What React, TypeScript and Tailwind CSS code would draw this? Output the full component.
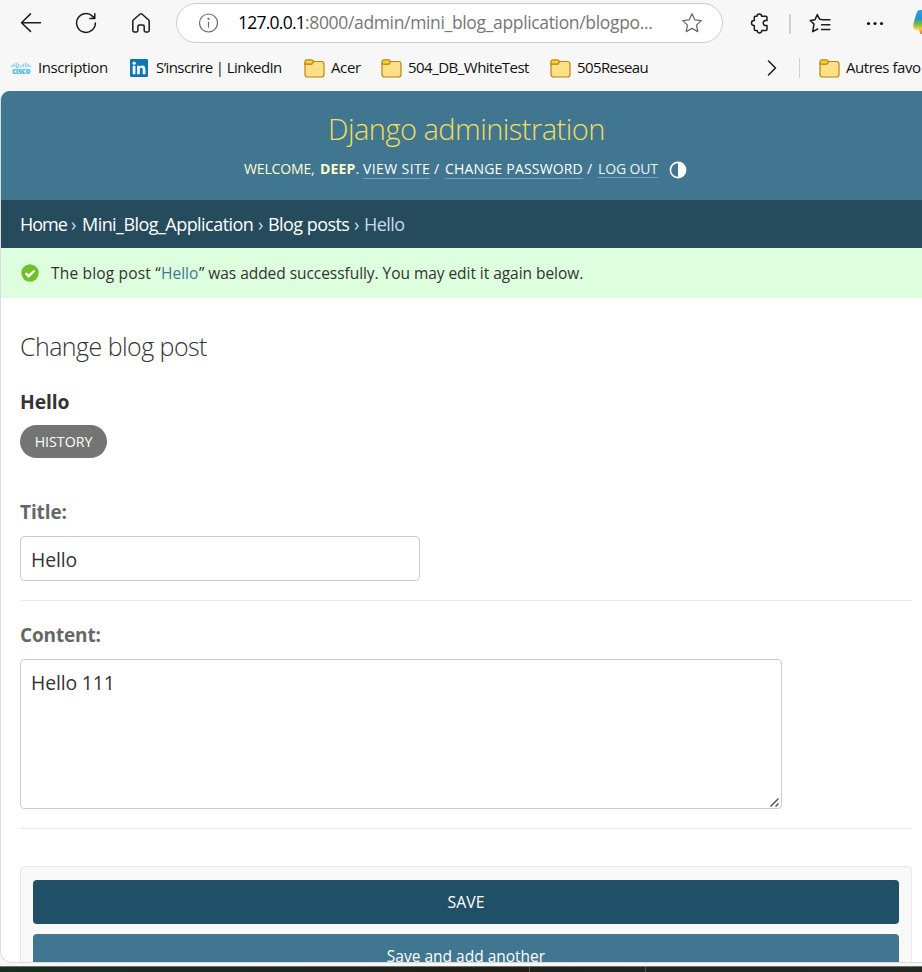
import React from "react";

function FolderIcon() {
  return (
    <svg width="21" height="19" viewBox="0 0 21 19" className="shrink-0">
      <path d="M1 4v11.500A2.500 2.500 0 0 0 3.500 18h14a2.500 2.500 0 0 0 2.500-2.500V5A2.500 2.500 0 0 0 17.500 2.500H9.500L8 5H1Z" fill="#ffdf87" stroke="#b8860b" strokeWidth="1.200" />
      <path d="M1 5V2.700A1.900 1.900 0 0 1 2.900.8h4.300c1 0 1.700.5 2.300 1.500L8.400 4.300c-.4.600-.8.800-1.500.8Z" fill="#fbcf3b" stroke="#b8860b" strokeWidth="1.200" />
    </svg>
  );
}

function CiscoIcon() {
  return (
    <svg width="20" height="14" viewBox="0 0 20 14" className="shrink-0">
      <g stroke="#8fd3ee" strokeWidth="1.500" strokeLinecap="round">
        <path d="M.8 4.500v1M3 3.200v2.300M5.300 2.200v3.500M7.600 3.200v2.300M10 4.500v1M12.300 3.200v2.300M14.700 2.200v3.500M17 3.200v2.300M19.200 4.500v1" />
      </g>
      <text x="10" y="12.500" textAnchor="middle" fontSize="8" fontWeight="800" fill="#4dbde6" textLength="18" lengthAdjust="spacingAndGlyphs">cisco</text>
    </svg>
  );
}

function LinkedInIcon() {
  return (
    <svg width="18" height="18" viewBox="0 0 18 18" className="shrink-0">
      <rect width="18" height="18" rx="1.300" fill="#0a76b7" />
      <circle cx="4.100" cy="4.200" r="1.600" fill="#fff" />
      <path d="M2.700 6.800h2.700v8.400H2.700zM7.100 6.800h2.600v1.200c.5-.8 1.400-1.400 2.600-1.400 2.300 0 3.100 1.500 3.100 3.800v4.800h-2.700v-4.300c0-1.200-.2-2.100-1.300-2.100-1.200 0-1.600.9-1.600 2.100v4.300H7.100z" fill="#fff" />
    </svg>
  );
}

function Bookmark({ icon, label, className }: { icon: React.ReactNode; label: string; className: string }) {
  return (
    <div className={"flex shrink-0 items-center whitespace-nowrap text-[15px] text-[#111] " + className}>
      {icon}
      <span className="pb-0.5">{label}</span>
    </div>
  );
}

function Toolbar() {
  return (
    <div className="flex h-[46px] shrink-0 items-center">
      <svg width="22" height="22" viewBox="0 0 22 22" className="ml-5 shrink-0" fill="none" stroke="#1b1b1b" strokeWidth="1.500" strokeLinecap="round" strokeLinejoin="round">
        <path d="M20.500 10.700H1.500M10.500 1.900 1.500 10.700l9 8.700" />
      </svg>
      <svg width="22" height="22" viewBox="0 0 22 22" className="ml-[33px] shrink-0" fill="none" stroke="#1b1b1b" strokeWidth="1.500" strokeLinecap="round" strokeLinejoin="round">
        <path d="M20.400 11a9.400 9.400 0 1 1-3-6.900L19.700 6.400M19.800 1.700v4.800h-4.900" />
      </svg>
      <svg width="20" height="22" viewBox="0 0 20 22" className="ml-[34px] shrink-0" fill="none" stroke="#1b1b1b" strokeWidth="1.500" strokeLinejoin="round">
        <path d="M1.800 9.300c0-.6.300-1.100.7-1.500l6.400-5.600a1.700 1.700 0 0 1 2.200 0l6.400 5.600c.4.400.7.900.7 1.500v9.200c0 .8-.6 1.400-1.400 1.400h-2.300c-.8 0-1.300-.6-1.300-1.300v-4.100c0-.8-.6-1.400-1.400-1.400H8.300c-.8 0-1.400.6-1.400 1.400v4.100c0 .7-.5 1.300-1.300 1.300H3.200c-.8 0-1.400-.6-1.400-1.400Z" />
      </svg>
      <div className="ml-[25px] flex h-10 w-[547px] shrink-0 items-center rounded-full border border-[#cdcdcd] bg-white">
        <svg width="20" height="20" viewBox="0 0 20 20" className="ml-[21px] shrink-0" fill="none" stroke="#6b6b6b" strokeWidth="1.200">
          <circle cx="10.500" cy="10" r="9" />
          <path d="M10.500 8.700v6" />
          <circle cx="10.500" cy="5.800" r=".5" fill="#6b6b6b" />
        </svg>
        <div className="ml-5 flex w-[443px] shrink-0 whitespace-nowrap pb-0.5 text-[17.5px] text-[#767676]">
          <span className="w-[67px] tracking-[-0.75px] text-black">127.0.0.1</span>
          <span className="tracking-[-0.34px]">:8000/admin/mini_blog_application/blogpo...</span>
        </div>
        <svg width="22" height="22" viewBox="0 0 22 22" className="shrink-0" fill="none" stroke="#6b6b6b" strokeWidth="1.300" strokeLinejoin="round">
          <path d="m11 1.800 2.800 6 6.500.8-4.800 4.500 1.300 6.500L11 16.400l-5.800 3.200 1.300-6.500L1.700 8.600l6.500-.8Z" />
        </svg>
      </div>
      <svg width="20" height="22" viewBox="0 0 20 22" className="ml-[27px] shrink-0" fill="none" stroke="#1b1b1b" strokeWidth="1.500" strokeLinejoin="round">
        <path d="M5.300 4.200H7a2.300 2.300 0 0 1 4.600 0h4.300c.6 0 1.100.5 1.100 1.100v3.300h-1.300a2.500 2.500 0 0 0 0 5H17v3.700c0 .6-.5 1.100-1.100 1.100h-4.100v.2a2.300 2.300 0 0 1-4.600 0v-.2H5.400c-.6 0-1.100-.5-1.100-1.100v-3.900h-.4a2.400 2.400 0 0 1 0-4.800h.4V5.300c0-.6.400-1.100 1-1.100Z" />
      </svg>
      <div className="ml-[19px] mt-0.5 h-5 w-0.5 shrink-0 bg-[#d0d0d0]" />
      <svg width="22" height="22" viewBox="0 0 22 22" className="ml-[18px] shrink-0" fill="none" stroke="#1b1b1b" strokeWidth="1.500" strokeLinecap="round" strokeLinejoin="round">
        <path d="M12.800 7.600 10.700 7.300 8.300 2.600 6 7.800 1.300 8.500l3.700 3.600-1.300 7.600 5-2.700M13.500 7.800h7.300M12.500 12.700h8.300M12.500 17.500h8.300" />
      </svg>
      <svg width="18" height="6" viewBox="0 0 18 6" className="ml-[35px] mt-0.5 shrink-0" fill="#111">
        <circle cx="2.500" cy="2.500" r="1.600" />
        <circle cx="9" cy="2.500" r="1.600" />
        <circle cx="15.500" cy="2.500" r="1.600" />
      </svg>
      <svg width="9" height="26" viewBox="0 0 9 26" className="ml-auto shrink-0">
        <defs>
          <linearGradient id="copilot" x1="0" y1="0" x2="0" y2="1">
            <stop offset="0" stopColor="#1aa7ee" />
            <stop offset=".35" stopColor="#2b8fd0" />
            <stop offset=".58" stopColor="#6bbd45" />
            <stop offset=".78" stopColor="#ffc629" />
            <stop offset="1" stopColor="#f4683c" />
          </linearGradient>
        </defs>
        <path d="M9 0H7.500C5 0 4 1.500 3.300 4L.8 12C-.6 17 .5 19.500 4 19.500h2L7.500 24H9Z" fill="url(#copilot)" />
      </svg>
    </div>
  );
}

function BookmarksBar() {
  return (
    <div className="flex h-[45px] shrink-0 items-center pb-px pl-[11px]">
      <Bookmark icon={<CiscoIcon />} label="Inscription" className="w-[119px] gap-[7px] tracking-[-0.4px]" />
      <Bookmark icon={<LinkedInIcon />} label="S’inscrire | LinkedIn" className="w-[174px] gap-2 tracking-[-0.6px]" />
      <Bookmark icon={<FolderIcon />} label="Acer" className="w-[77px] gap-1.5 tracking-[-0.36px]" />
      <Bookmark icon={<FolderIcon />} label="504_DB_WhiteTest" className="w-[169px] gap-1.5 tracking-[-0.52px]" />
      <Bookmark icon={<FolderIcon />} label="505Reseau" className="w-[217px] gap-1.5 tracking-[-0.6px]" />
      <svg width="10" height="16" viewBox="0 0 10 16" className="shrink-0" fill="none" stroke="#1b1b1b" strokeWidth="1.500" strokeLinecap="round" strokeLinejoin="round">
        <path d="m1.500 1 7 7-7 7" />
      </svg>
      <div className="ml-[22px] mr-[19px] h-5 w-px shrink-0 bg-[#cfcfcf]" />
      <Bookmark icon={<FolderIcon />} label="Autres favo" className="gap-1.5 tracking-[-0.45px]" />
    </div>
  );
}

function AdminHeader() {
  return (
    <header className="h-[109px] shrink-0 bg-[#417690] pt-5">
      <h1 className="pl-[327px] text-[29px] font-light leading-[36px] tracking-[-0.52px] text-[#f5dd5d]">Django administration</h1>
      <div className="mt-[13px] flex items-start whitespace-nowrap pl-[243px] text-[14px] leading-[18px] tracking-[0.17px] text-[#ffc]">
        <span className="w-[76px] shrink-0 tracking-[-0.15px]">WELCOME,</span>
        <span className="w-[43px] shrink-0"><b>DEEP</b>.</span>
        <span className="w-[67px] shrink-0 border-b border-[#7a9fb1] tracking-[0.4px] text-white">VIEW SITE</span>
        <span className="w-[15px] shrink-0 pl-1 text-white">/</span>
        <span className="w-[138px] shrink-0 border-b border-[#7a9fb1] text-white">CHANGE PASSWORD</span>
        <span className="w-[15px] shrink-0 pl-1 text-white">/</span>
        <span className="h-[18px] w-[60px] shrink-0 border-b border-[#7a9fb1] tracking-[-0.15px] text-white/90">LOG OUT</span>
        <svg width="18" height="18" viewBox="0 0 18 18" className="ml-[11px] mt-px shrink-0">
          <circle cx="9" cy="9" r="7.600" fill="none" stroke="#fff" strokeWidth="1.600" />
          <path d="M9 1.400a7.600 7.600 0 0 1 0 15.200Z" fill="#fff" />
        </svg>
      </div>
    </header>
  );
}

function Breadcrumbs() {
  return (
    <nav className="flex h-12 shrink-0 items-center whitespace-nowrap bg-[#264b5d] pl-[19px] text-[18px] tracking-[-0.55px] text-white">
      <span className="w-[51px] tracking-[-1px]">Home</span>
      <span className="w-[11px] text-[#c4dce8]">›</span>
      <span className="w-[176px]">Mini_Blog_Application</span>
      <span className="w-2.5 text-[#c4dce8]">›</span>
      <span className="w-[86px]">Blog posts</span>
      <span className="w-2.5 text-[#c4dce8]">›</span>
      <span className="text-[#c4dce8]">Hello</span>
    </nav>
  );
}

function SuccessMessage() {
  return (
    <div className="flex h-[50px] shrink-0 items-center whitespace-nowrap bg-[#ddffdd] pl-5 text-[15.5px]">
      <svg width="18" height="18" viewBox="0 0 18 18" className="mr-3 shrink-0">
        <circle cx="9" cy="9" r="8.700" fill="#70bf2b" />
        <path d="m4.700 9.200 3 3 5.800-5.700" fill="none" stroke="#fff" strokeWidth="2.400" />
      </svg>
      <p className="flex pt-0.5">
        <span className="w-[110px] tracking-[0.18px]">The blog post “</span>
        <a className="w-[38px] text-[#417893]">Hello</a>
        <span className="tracking-[-0.05px]">” was added successfully. You may edit it again below.</span>
      </p>
    </div>
  );
}

function ChangeForm() {
  return (
    <main className="flex shrink-0 flex-col items-start pl-[19px] pr-2.5 pt-[30px]">
      <h2 className="text-[25px] font-light leading-[36px] tracking-[-0.55px]">Change blog post</h2>
      <h3 className="mt-[25px] text-[19.3px] font-bold leading-[25px] tracking-[-0.1px]">Hello</h3>
      <a className="mt-[11px] flex h-[33px] w-[87px] items-center justify-center rounded-full bg-[#747474] text-[14.2px] text-white">HISTORY</a>

      <label className="mt-[42px] text-[19px] font-bold leading-[25px] tracking-[-0.1px] text-[#666]">Title:</label>
      <input readOnly value="Hello" className="mt-[11px] h-[45px] w-[400px] rounded-[4px] border border-[#ccc] px-2.5 pt-px text-[19.4px] tracking-[-0.15px] outline-none" />
      <div className="mt-[19px] h-px w-full bg-[#e8e8e8]" />

      <label className="mt-[22px] text-[19px] font-bold leading-[25px] tracking-[-0.15px] text-[#666]">Content:</label>
      <div className="relative mt-[11px] h-[150px] w-[762px]">
        <textarea readOnly value="Hello 111" className="block h-full w-full resize-none rounded-[4px] border border-[#ccc] px-2.5 pt-[9px] text-[19.4px] leading-[28px] tracking-[-0.15px] outline-none" />
        <svg width="11" height="11" viewBox="0 0 11 11" className="absolute bottom-px right-0.5" stroke="#555" strokeWidth="1.500">
          <path d="M1.500 9.500 9.500 1.500M6.500 9.500l3-3" />
        </svg>
      </div>
      <div className="mt-[19px] h-px w-full bg-[#e8e8e8]" />

      <div className="mt-[37px] flex w-full flex-col gap-2.5 rounded-[4px] border border-[#e8e8e8] bg-[#f8f8f8] px-3 py-[13px] text-white">
        <button className="h-11 rounded-[4px] bg-[#205067] pt-0.5 text-[15.8px]">SAVE</button>
        <button className="h-11 rounded-[4px] bg-[#417690] pt-0.5 text-[15.5px]">Save and add another</button>
      </div>
    </main>
  );
}

export default function App() {
  return (
    <div className="flex h-[972px] w-[922px] flex-col overflow-hidden bg-[#f7f7f7] font-['Open_Sans','Noto_Sans',sans-serif] text-[#333]">
      <Toolbar />
      <BookmarksBar />
      <div className="flex h-[872px] shrink-0 flex-col overflow-hidden rounded-bl-[12px] rounded-tl-[9px] border-b border-l border-[#dcdcdc] bg-white">
        <AdminHeader />
        <Breadcrumbs />
        <SuccessMessage />
        <ChangeForm />
      </div>
      <div className="mt-[3px] flex h-1.5 shrink-0 border-t border-[#707070] bg-linear-to-r from-[#16301f] via-[#1f2018] to-[#222a20]">
        <div className="ml-[529px] w-px bg-[#55564c]" />
        <div className="ml-[115px] w-px bg-[#55564c]" />
      </div>
    </div>
  );
}
